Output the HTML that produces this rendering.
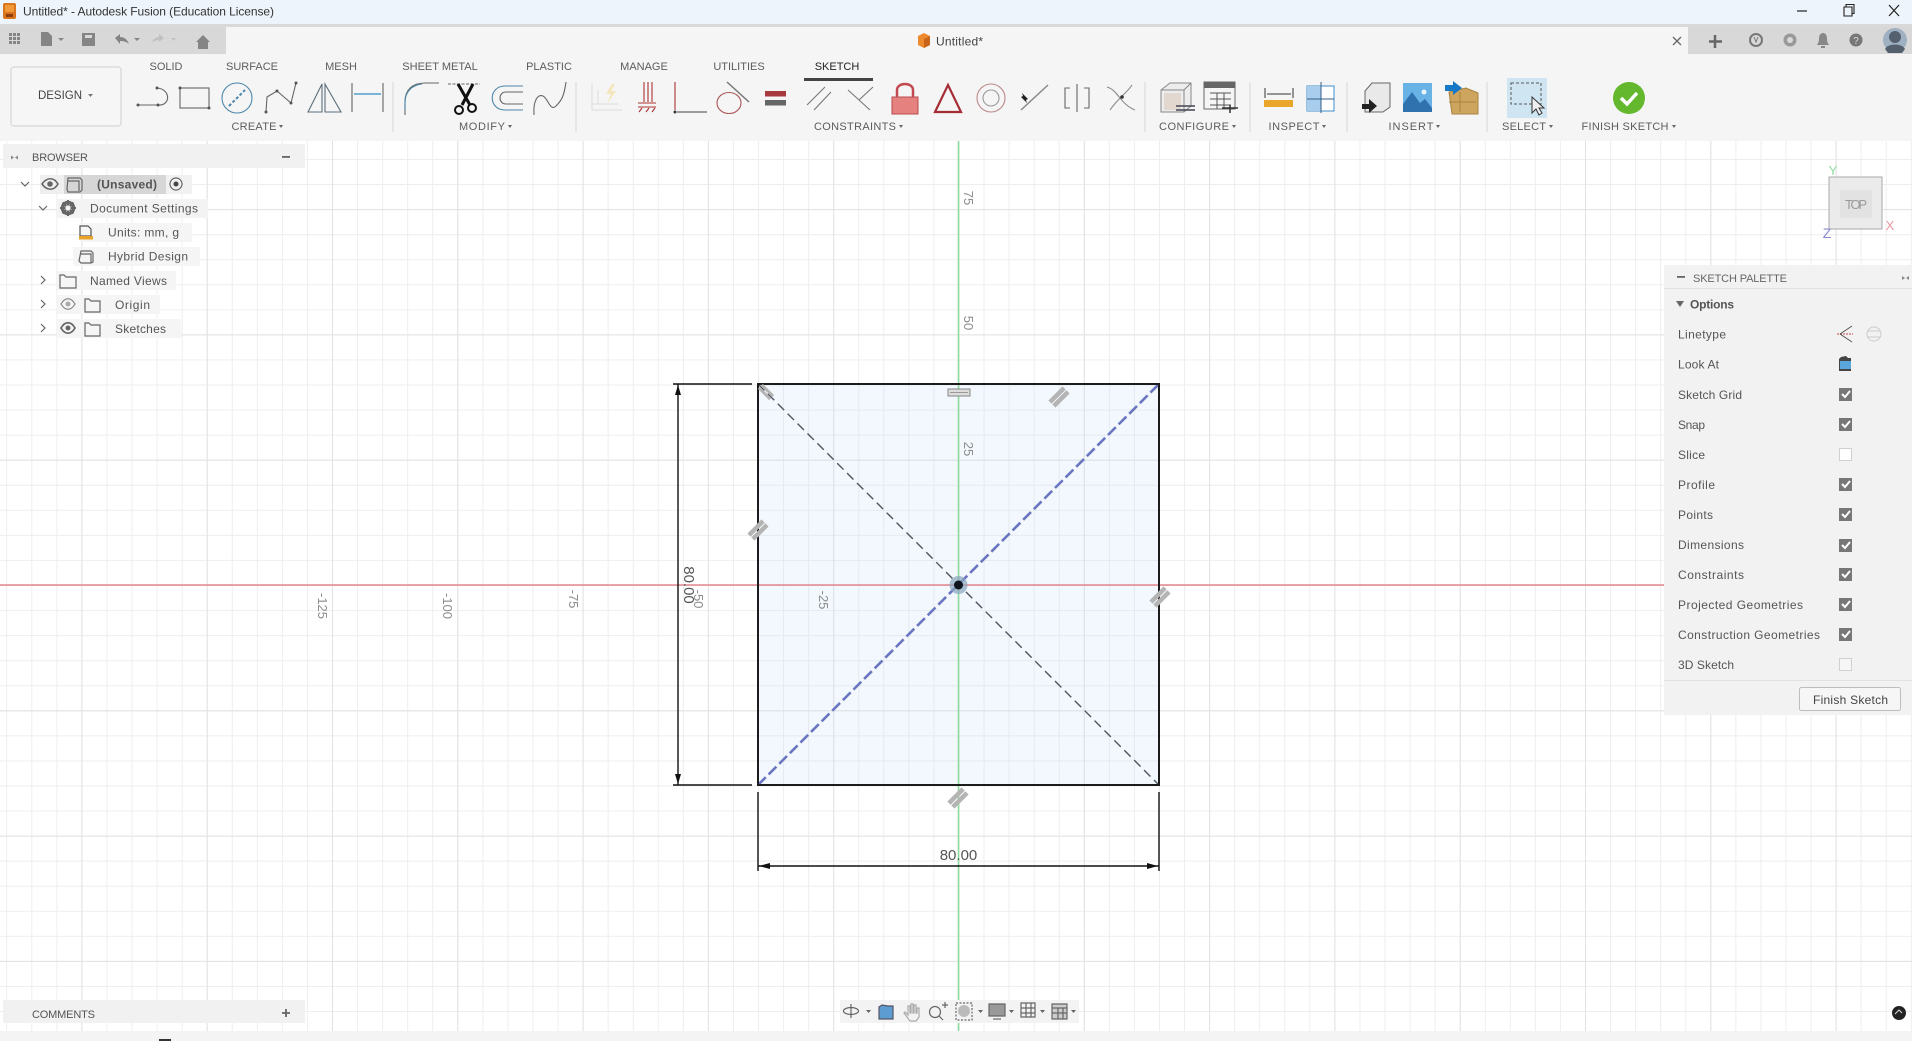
<!DOCTYPE html>
<html><head><meta charset="utf-8"><style>
html,body{margin:0;padding:0;background:#fff;width:1912px;height:1041px;overflow:hidden}
svg{display:block;position:absolute;left:0;top:0}
text{font-family:"Liberation Sans",sans-serif;fill:#555}
.r{font-size:11px;text-anchor:middle;fill:#5c5c5c}
.t{font-size:12px;fill:#555}
.i{fill:none;stroke:#666;stroke-width:1.1}
.a{font-size:13px;fill:#8c8c8c;text-anchor:middle}
.s{fill:#b4b4b4}
</style></head><body>
<svg width="1912" height="1041" viewBox="0 0 1912 1041" xmlns="http://www.w3.org/2000/svg">
<defs>
<pattern id="g1" patternUnits="userSpaceOnUse" x="958.5" y="585" width="25.06" height="25.06"><path d="M0 0V25.06M0 0H25.06" stroke="#eeeeee" stroke-width="2" fill="none"/></pattern>
<pattern id="g2" patternUnits="userSpaceOnUse" x="958.5" y="585" width="125.3" height="125.3"><path d="M0 0V125.3M0 0H125.3" stroke="#e2e2e2" stroke-width="2" fill="none"/></pattern>
</defs>
<!-- canvas -->
<rect width="1912" height="1041" fill="#fff"/>
<rect y="141" width="1912" height="890" fill="url(#g1)"/>
<rect y="141" width="1912" height="890" fill="url(#g2)"/>
<rect x="758" y="384" width="401" height="401" fill="#bcdcf7" fill-opacity=".2"/>
<line x1="0" y1="585" x2="1664" y2="585" stroke="#e4868e" stroke-width="1.4"/>
<line x1="958.5" y1="141" x2="958.5" y2="1031" stroke="#8edb9c" stroke-width="1.6"/>
<!-- axis labels -->
<text class="a" transform="translate(963,198) rotate(90)" dy="-1">75</text>
<text class="a" transform="translate(963,323) rotate(90)" dy="-1">50</text>
<text class="a" transform="translate(963,449) rotate(90)" dy="-1">25</text>
<text class="a" transform="translate(318,606) rotate(90)">-125</text>
<text class="a" transform="translate(443,606) rotate(90)">-100</text>
<text class="a" transform="translate(569,599) rotate(90)">-75</text>
<text class="a" transform="translate(694,599) rotate(90)">-50</text>
<text class="a" transform="translate(819,600) rotate(90)">-25</text>
<!-- sketch -->
<g fill="none">
<path d="M758 384L1159 785" stroke="#4d5560" stroke-width="1.4" stroke-dasharray="9 5"/>
<path d="M758 785L1159 384" stroke="#6a76c0" stroke-width="2.6" stroke-dasharray="11 4"/>
<rect x="758" y="384" width="401" height="401" stroke="#1c1c1c" stroke-width="2"/>
<path d="M673 384H752M673 785H752M678 384V785M758 792V871M1159 792V871M758 866H1159" stroke="#111" stroke-width="1.4"/>
</g>
<path d="M678 385l-3 10h6zM678 784l-3-10h6zM759 866l11-3v6zM1158 866l-11-3v6z" fill="#111"/>
<text transform="translate(684,585) rotate(90)" font-size="15" text-anchor="middle" style="fill:#555">80.00</text>
<text x="958.5" y="860" font-size="15" text-anchor="middle" style="fill:#555">80.00</text>
<circle cx="958.5" cy="585" r="9" fill="#8aa5bd" fill-opacity=".7"/><circle cx="958.5" cy="585" r="4.5" fill="#10141c"/>
<!-- constraint glyphs -->
<g transform="translate(758,530) rotate(-45)"><rect x="-10" y="-5" width="20" height="4.500" class="s"/><rect x="-10" y=".5" width="20" height="4.500" class="s"/></g>
<g transform="translate(1160,597) rotate(-45)"><rect x="-10" y="-5" width="20" height="4.500" class="s"/><rect x="-10" y=".5" width="20" height="4.500" class="s"/></g>
<g transform="translate(1059,397) rotate(-45)"><rect x="-10" y="-5" width="20" height="4.500" class="s"/><rect x="-10" y=".5" width="20" height="4.500" class="s"/></g>
<g transform="translate(958,798) rotate(-45)"><rect x="-10" y="-5" width="20" height="4.500" class="s"/><rect x="-10" y=".5" width="20" height="4.500" class="s"/></g>
<g transform="translate(766,392) rotate(45)"><rect x="-8" y="-3.500" width="16" height="3" class="s"/><rect x="-8" y=".5" width="16" height="3" class="s"/></g>
<rect x="948" y="389" width="22" height="7" fill="#ddd" stroke="#888"/><path d="M950 392.500H968" stroke="#999"/>

<!-- title bar -->
<rect width="1912" height="24" fill="#eef4fb"/>
<rect y="24" width="1912" height="3.500" fill="#d9d9d9"/>
<rect x="3" y="3" width="13" height="16" rx="2" fill="#d9741f"/><rect x="5" y="5" width="9" height="7" fill="#f29a3a"/><rect x="6" y="14" width="7" height="3" fill="#8e3d10"/>
<text x="23" y="15.500" font-size="12" style="fill:#333" textLength="251">Untitled* - Autodesk Fusion (Education License)</text>
<path d="M1797 11H1807" stroke="#222" stroke-width="1.2"/>
<path d="M1844 7h8v9h-8zM1846 7V4.500h8v9h-2" fill="none" stroke="#222" stroke-width="1.1"/>
<path d="M1889 5l10 11M1899 5l-10 11" stroke="#222" stroke-width="1.2"/>

<!-- ribbon -->
<rect y="27" width="1912" height="114" fill="#f5f5f5"/>
<rect y="27" width="226" height="27" fill="#d8d8d8"/>
<rect x="1688" y="27" width="224" height="27" fill="#d8d8d8"/>
<!-- quick access -->
<g fill="#858585">
<rect x="9" y="33" width="3" height="3"/><rect x="13" y="33" width="3" height="3"/><rect x="17" y="33" width="3" height="3"/><rect x="9" y="37" width="3" height="3"/><rect x="13" y="37" width="3" height="3"/><rect x="17" y="37" width="3" height="3"/><rect x="9" y="41" width="3" height="3"/><rect x="13" y="41" width="3" height="3"/><rect x="17" y="41" width="3" height="3"/>
<path d="M41 32h7l4 4v10H41z"/><path d="M58 38h6l-3 3z"/>
<path d="M82 33h13v13H82z"/>
<path d="M115 38l5-4v3c4 0 7 2 9 7-2-2-5-3-9-3v3z"/><path d="M134 38h6l-3 3z"/>
<path d="M164 38l-5-4v3c-3 0-6 2-7 6 2-2 4-3 7-3v2z" fill="#c0c0c0"/><path d="M171 38h5l-2.500 3z" fill="#c0c0c0"/>
<path d="M196 42l7-7 7 7h-2v7h-10v-7z"/>
</g>
<rect x="85" y="35" width="7" height="3" fill="#d8d8d8"/>
<!-- doc tab -->
<path d="M918 36l6-3 6 3v9l-6 3-6-3z" fill="#ee8a2e"/><path d="M924 39v9l6-3v-9z" fill="#c9651b"/>
<text x="936" y="45.500" font-size="12" style="fill:#444" textLength="47">Untitled*</text>
<path d="M1673 37l8 8M1681 37l-8 8" stroke="#666" stroke-width="1.3"/>
<!-- right tools -->
<path d="M1715 35v13M1709 41.500h13" stroke="#666" stroke-width="2.500"/>
<circle cx="1756" cy="40" r="6" fill="none" stroke="#777" stroke-width="2"/><path d="M1754 37l2 5 2-5" fill="none" stroke="#777"/>
<circle cx="1790" cy="40" r="6.500" fill="#999"/><circle cx="1790" cy="40" r="3" fill="#d8d8d8"/>
<path d="M1823 33c-3 0-4 3-4 6 0 3-1 4-2 6h12c-1-2-2-3-2-6 0-3-1-6-4-6zM1821 46h4v2h-4z" fill="#888"/>
<circle cx="1856" cy="40" r="6.500" fill="#777"/><text x="1856" y="44" font-size="10" text-anchor="middle" style="fill:#ddd">?</text>
<circle cx="1895" cy="40" r="12" fill="#9fb0c2"/><circle cx="1895" cy="37" r="6" fill="#54606e"/><path d="M1885 49c3-6 17-6 20 0l-3 4h-14z" fill="#54606e"/>
<!-- tabs -->
<text class="r" x="166" y="70">SOLID</text>
<text class="r" x="252" y="70">SURFACE</text>
<text class="r" x="341" y="70">MESH</text>
<text class="r" x="440" y="70">SHEET METAL</text>
<text class="r" x="549" y="70">PLASTIC</text>
<text class="r" x="644" y="70">MANAGE</text>
<text class="r" x="739" y="70">UTILITIES</text>
<text class="r" x="837" y="70" style="fill:#222">SKETCH</text>
<rect x="804" y="78" width="69" height="3" fill="#444"/>
<!-- design -->
<rect x="11" y="67" width="110" height="59" rx="3" fill="#f6f6f6" stroke="#dcdcdc" stroke-width="1.5"/>
<text x="38" y="99" font-size="11.500" style="fill:#444" textLength="44">DESIGN</text>
<path d="M88 94h5l-2.500 3z" fill="#777"/>
<!-- group labels -->
<text class="r" x="254" y="130" textLength="45">CREATE</text><path d="M279 125h4l-2 3z" fill="#666"/>
<text class="r" x="482" y="130" textLength="46">MODIFY</text><path d="M508 125h4l-2 3z" fill="#666"/>
<text class="r" x="855" y="130" textLength="82">CONSTRAINTS</text><path d="M899 125h4l-2 3z" fill="#666"/>
<text class="r" x="1194" y="130" textLength="70">CONFIGURE</text><path d="M1232 125h4l-2 3z" fill="#666"/>
<text class="r" x="1294" y="130" textLength="51">INSPECT</text><path d="M1322 125h4l-2 3z" fill="#666"/>
<text class="r" x="1411" y="130" textLength="45">INSERT</text><path d="M1436 125h4l-2 3z" fill="#666"/>
<text class="r" x="1524" y="130" textLength="44">SELECT</text><path d="M1549 125h4l-2 3z" fill="#666"/>
<text class="r" x="1625" y="130" textLength="87">FINISH SKETCH</text><path d="M1672 125h4l-2 3z" fill="#666"/>
<!-- separators -->
<path d="M393 82V132M576 82V132M1145 82V132M1250 82V132M1347 82V132M1487 82V132" stroke="#e2e2e2" stroke-width="1.5"/>
<!-- create icons -->
<g class="i">
<path d="M138 105H158C171 106 171 89 157 88"/>
<rect x="180" y="88" width="29" height="20"/>
<circle cx="237" cy="98" r="15" stroke="#4b86ab"/>
<path d="M229 106L245 90" stroke="#4b86ab" stroke-dasharray="3 2" stroke-width="2"/>
<path d="M266 112L267 97L277 91L291 103L296 83"/>
<path d="M308 112L322 84V112zM325 84L341 112H325z" stroke="#5a6f7c"/>
<path d="M352 83V112M383 83V112"/>
<path d="M354 94H381" stroke="#2f8fc4" stroke-width="1.300"/>
</g>
<g fill="#555"><circle cx="138" cy="105" r="1.500"/><circle cx="158" cy="105" r="1.500"/><circle cx="157" cy="88" r="1.500"/><circle cx="180" cy="88" r="1.500"/><circle cx="209" cy="108" r="1.500"/><circle cx="266" cy="112" r="1.500"/><circle cx="277" cy="91" r="1.500"/><circle cx="291" cy="103" r="1.500"/><circle cx="296" cy="83" r="1.500"/></g>
<!-- modify -->
<g class="i">
<path d="M405 115V102C405 90 412 83 425 83H439"/>
<path d="M405 110V102C405 92 412 85 422 84" stroke="#4b86ab"/>
<path d="M448 84H480" stroke-dasharray="3 1.500"/>
<path d="M458 84L470 105M473 84L462 105" stroke="#111" stroke-width="3"/>
<circle cx="459" cy="110" r="4" stroke="#111" stroke-width="2"/><circle cx="472" cy="108" r="4" stroke="#111" stroke-width="2"/>
<path d="M523 86H505C488 86 488 110 505 110H523" stroke="#4b86ab"/>
<path d="M523 92H506C498 92 498 104 506 104H523"/>
<path d="M534 115C533 100 538 94 543 96S550 112 556 106S564 96 566 82"/>
</g>
<!-- constraints -->
<path d="M592 84V110H622M598 90V104M592 104H618" stroke="#dcdcdc" fill="none"/>
<path d="M612 84l-6 10h5l-4 10 9-13h-5l4-7z" fill="#f4e6bc"/>
<g class="i">
<path d="M644 82V102M648 82V102M652 82V102" stroke="#a33"/>
<path d="M638 103H656M638 107H656" stroke="#a33"/>
<path d="M639 112l3-4M646 112l3-4M652 112l3-4" stroke="#a33"/>
<path d="M675 82V110" stroke="#a33"/><path d="M677 112H707" stroke="#444"/>
<ellipse cx="729" cy="103" rx="12" ry="10.500" stroke="#a55"/>
<path d="M727 82L749 102" stroke="#777" stroke-width="1.500"/>
<path d="M807 105L825 87M814 110L831 92" stroke="#777"/>
<path d="M848 90L870 110M873 87L859 100" stroke="#777"/>
<path d="M935 112L948 85L961 112z" stroke="#a62c36" stroke-width="2.200"/>
<circle cx="991" cy="98" r="14" stroke="#b88"/><circle cx="991" cy="98" r="8" stroke="#999"/>
<path d="M1021 110L1048 85" stroke="#888" stroke-width="1.500"/>
<path d="M1070 88H1065V108H1070M1084 88H1089V108H1084M1077 84V112" stroke="#666"/>
<path d="M1107 87C1118 90 1120 104 1135 110M1110 110C1118 98 1126 94 1132 85" stroke="#888"/>
</g>
<circle cx="675" cy="112" r="1.500" fill="#333"/>
<rect x="765" y="91" width="21" height="5.500" fill="#a63a3e"/><rect x="765" y="100" width="21" height="5.500" fill="#666"/>
<path d="M897 97v-7c0-8 16-8 16 0v7" fill="none" stroke="#c24950" stroke-width="2.500"/>
<rect x="892" y="97" width="26" height="17" fill="#e5827f" stroke="#b94a4e"/>
<path d="M1022 93l6 6-2 1 1 3-6-6 2-1z" fill="#222"/>
<circle cx="1122" cy="97" r="1.800" fill="#333"/>
<!-- configure -->
<path d="M1161 90L1170 83H1191V106L1184 112H1161z" fill="#ededed" stroke="#888"/><path d="M1161 90H1184V112M1184 90L1191 83" fill="none" stroke="#888"/><rect x="1164" y="93" width="17" height="17" fill="#e2d8cf"/>
<path d="M1176 106H1195M1176 110H1195" stroke="#445" stroke-width="1.500"/>
<rect x="1204" y="82" width="31" height="6" fill="#666"/><rect x="1204" y="82" width="31" height="27" fill="none" stroke="#666"/>
<path d="M1210 93H1231M1210 99H1231M1210 105H1231M1217 93V109M1224 93V109" stroke="#555"/>
<path d="M1222 108H1238M1230 105V113" stroke="#333" stroke-width="1.500"/>
<!-- inspect -->
<path d="M1265 88V98M1293 88V98M1267 94H1291" stroke="#333"/><rect x="1264" y="100" width="29" height="7" fill="#e9a62b"/>
<rect x="1307" y="86" width="27" height="25" fill="#fff" stroke="#3f8dcb"/><rect x="1307" y="86" width="14" height="25" fill="#a9cdec"/><path d="M1307 99H1334M1321 82V113" stroke="#345f88"/>
<!-- insert -->
<path d="M1365 91L1372 83H1390V107L1383 112H1365z" fill="#e9e9e9" stroke="#666"/><path d="M1362 104h7v-5l8 7-8 7v-4h-7z" fill="#222"/>
<rect x="1403" y="83" width="29" height="29" fill="#68b2e5"/><circle cx="1424" cy="92" r="2.500" fill="#e8f5fc"/><path d="M1403 112V104L1412 92L1420 103L1425 99L1432 108V112z" fill="#2f72ae"/>
<path d="M1449 92L1466 88L1478 93V114H1452z" fill="#cda55e" stroke="#a98342"/><path d="M1460 92V112M1449 102H1476" stroke="#a98342"/>
<path d="M1445 85h8v-4l9 7-9 7v-4h-8z" fill="#1878c8"/>
<!-- select -->
<rect x="1507" y="78" width="40" height="40" fill="#cfe6f2"/>
<rect x="1511" y="83" width="30" height="21" fill="none" stroke="#555" stroke-dasharray="3 2"/>
<path d="M1532 97V113L1536 109L1539 115L1542 113L1539 108H1544z" fill="#eee" stroke="#333"/>
<!-- finish -->
<circle cx="1629" cy="98" r="16" fill="#63b82e"/><path d="M1621 98l6 6 10-11" fill="none" stroke="#fff" stroke-width="3.500"/>

<!-- browser -->
<rect x="3" y="144" width="302" height="24" fill="#f1f1f1"/>
<path d="M11 155.500l3 2-3 2zM18 155.500l-3 2 3 2z" fill="#888"/>
<text x="32" y="161" textLength="56" style="font-size:11px">BROWSER</text>
<rect x="282" y="156" width="8" height="1.800" fill="#666"/>
<rect x="40" y="175" width="24" height="19" fill="#efefef"/>
<rect x="64" y="175" width="102" height="19" fill="#d6d6d6"/>
<rect x="166" y="175" width="26" height="19" fill="#f1f1f1"/>
<rect x="57" y="199" width="151" height="19" fill="#f3f3f3"/>
<rect x="80" y="223" width="112" height="19" fill="#f5f5f5"/>
<rect x="73" y="247" width="127" height="19" fill="#f5f5f5"/>
<rect x="57" y="271" width="119" height="19" fill="#f5f5f5"/>
<rect x="57" y="295" width="103" height="19" fill="#f5f5f5"/>
<rect x="57" y="319" width="124" height="19" fill="#f5f5f5"/>
<g fill="none" stroke="#666" stroke-width="1.200">
<path d="M21 182l4 4 4-4M39 206l4 4 4-4M41 276l4 4-4 4M41 300l4 4-4 4M41 324l4 4-4 4"/>
<path d="M42 184c5-7 12-7 16 0-4 7-11 7-16 0z" stroke-width="1.600"/>
<path d="M68 178h12l2 2v10l-2 2H68l-1-3z"/><path d="M68 181h11v10"/>
<circle cx="176" cy="184" r="6"/>
<path d="M81 251h10l2 2v9l-2 1H81l-2-2z"/><path d="M81 254h10v9"/>
<path d="M60 275h4l2 2h10v11H60zM85 299h4l2 2h9v11H85zM85 323h4l2 2h9v11H85z"/>
<path d="M61 304c4-7 10-7 14 0-4 7-10 7-14 0z" stroke="#888"/>
<path d="M61 328c4-7 10-7 14 0-4 7-10 7-14 0z" stroke-width="1.700"/>
<path d="M80 226h8l3 3v7H80z" stroke="#555"/>
</g>
<circle cx="50" cy="184" r="2.800" fill="#666"/><circle cx="176" cy="184" r="2.500" fill="#444"/>
<circle cx="68" cy="328" r="2.500" fill="#666"/><circle cx="68" cy="304" r="2.500" fill="#aaa"/>
<rect x="79" y="236" width="14" height="3.500" fill="#e9a32b"/>
<circle cx="68" cy="208" r="5.500" fill="none" stroke="#666" stroke-width="3.500"/>
<path d="M68 200v16M60 208h16M62.500 202.500l11 11M73.500 202.500l-11 11" stroke="#666" stroke-width="2"/><circle cx="68" cy="208" r="2.600" fill="#f3f3f3"/>
<text class="t" x="97" y="188.500" textLength="60" style="font-weight:bold;fill:#555">(Unsaved)</text>
<text class="t" x="90" y="212.500" textLength="108">Document Settings</text>
<text class="t" x="108" y="236.500" textLength="71">Units: mm, g</text>
<text class="t" x="108" y="260.500" textLength="80">Hybrid Design</text>
<text class="t" x="90" y="285" textLength="77">Named Views</text>
<text class="t" x="115" y="309" textLength="35">Origin</text>
<text class="t" x="115" y="333" textLength="51">Sketches</text>
<!-- comments -->
<rect x="3" y="1000" width="302" height="23" fill="#f1f1f1"/>
<text x="32" y="1018" textLength="63" style="font-size:11px;fill:#555">COMMENTS</text>
<path d="M286 1009v8M282 1013h8" stroke="#666" stroke-width="1.800"/>
<!-- bottom -->
<rect y="1031" width="1912" height="10" fill="#f4f4f4"/>
<rect x="159" y="1039" width="12" height="2" fill="#333"/>
<rect x="840" y="1000" width="239" height="23" fill="#f3f3f3"/>
<g fill="#666"><path d="M866 1010h5l-2.500 3zM978 1010h5l-2.500 3zM1009 1010h5l-2.500 3zM1040 1010h5l-2.500 3zM1071 1010h5l-2.500 3z"/></g>
<g fill="none" stroke="#666" stroke-width="1.200">
<ellipse cx="851" cy="1011" rx="7.500" ry="3.500"/><path d="M851 1004v14"/>
<path d="M879 1007l3-2 6 1h5v13h-14z" fill="#5d9cd1" stroke="#556"/>
<path d="M910 1021l-6-8 1-1 3 3v-9h2v7h1v-9h2v9h1v-8h2v8h1v-5h2v9l-3 4z" stroke="#aaa" fill="#f3f3f3"/>
<circle cx="935" cy="1012" r="5.500"/><path d="M939 1016l4 4M942 1005h6M945 1002v6"/>
<rect x="956" y="1003" width="16" height="17" stroke-dasharray="2 1.500"/>
<path d="M989 1004h16v12h-16z" fill="#999"/><path d="M993 1019h8"/>
<path d="M1021 1003h14v14h-14zM1026 1003v14M1031 1003v14M1021 1008h14M1021 1013h14"/>
<path d="M1052 1004h15v15h-15z" fill="#ccc"/><path d="M1052 1008h15M1058 1008v11M1063 1008v11M1052 1013h15"/>
</g>
<circle cx="964" cy="1011" r="6" fill="#bbb"/>
<circle cx="1899" cy="1013" r="7" fill="#222"/><path d="M1895 1014l4-4 3 3" fill="none" stroke="#ddd"/>
<!-- viewcube -->
<rect x="1829" y="177" width="53" height="52" fill="#ebebeb" stroke="#aaa"/>
<rect x="1840" y="190" width="32" height="28" fill="#e2e2e2"/>
<text x="1856" y="209" font-size="13" text-anchor="middle" textLength="22" style="fill:#9a9a9a">TOP</text>
<text x="1833" y="175" font-size="13" text-anchor="middle" style="fill:#8fdca4">Y</text>
<text x="1890" y="230" font-size="13" text-anchor="middle" style="fill:#ee98a0">X</text>
<text x="1827" y="238" font-size="14" text-anchor="middle" style="fill:#8888cc">Z</text>
<!-- palette -->
<rect x="1664" y="265" width="248" height="450" fill="#f2f2f2"/>
<path d="M1664 288.500H1912M1664 680.500H1912" stroke="#e2e2e2"/>
<rect x="1677" y="276" width="8" height="1.800" fill="#666"/>
<text x="1693" y="282" textLength="94" style="font-size:11px;fill:#666">SKETCH PALETTE</text>
<path d="M1902 276l3 2-3 2zM1909 276l-3 2 3 2z" fill="#888"/>
<path d="M1676 301h8l-4 6z" fill="#666"/>
<text class="t" x="1690" y="308.500" textLength="44" style="font-weight:bold">Options</text>
<text class="t" x="1678" y="338.500" textLength="48">Linetype</text>
<text class="t" x="1678" y="368.500" textLength="41">Look At</text>
<text class="t" x="1678" y="399" textLength="64">Sketch Grid</text>
<text class="t" x="1678" y="429" textLength="27">Snap</text>
<text class="t" x="1678" y="459" textLength="27">Slice</text>
<text class="t" x="1678" y="489" textLength="37">Profile</text>
<text class="t" x="1678" y="519" textLength="35">Points</text>
<text class="t" x="1678" y="549" textLength="66">Dimensions</text>
<text class="t" x="1678" y="579" textLength="66">Constraints</text>
<text class="t" x="1678" y="609" textLength="125">Projected Geometries</text>
<text class="t" x="1678" y="639" textLength="142">Construction Geometries</text>
<text class="t" x="1678" y="669" textLength="56">3D Sketch</text>
<path d="M1837 334H1853" stroke="#c44" stroke-dasharray="2 1"/><path d="M1840 334L1852 326M1840 334L1852 342" stroke="#555" fill="none"/>
<circle cx="1874" cy="334" r="7" fill="none" stroke="#ccc"/><path d="M1868 331h12M1868 337h12" stroke="#ccc"/>
<path d="M1839 359l2-2 5-1 2 2h3v13h-12z" fill="#444"/><rect x="1840" y="361" width="11" height="8" fill="#5aa5dc"/>
<g fill="#777">
<rect x="1839" y="388" width="13" height="13"/><rect x="1839" y="418" width="13" height="13"/><rect x="1839" y="478" width="13" height="13"/><rect x="1839" y="508" width="13" height="13"/><rect x="1839" y="539" width="13" height="13"/><rect x="1839" y="568" width="13" height="13"/><rect x="1839" y="598" width="13" height="13"/><rect x="1839" y="628" width="13" height="13"/>
</g>
<g fill="none" stroke="#fff" stroke-width="2">
<path d="M1842 394l3 3 5-6"/><path d="M1842 424l3 3 5-6"/><path d="M1842 484l3 3 5-6"/><path d="M1842 514l3 3 5-6"/><path d="M1842 545l3 3 5-6"/><path d="M1842 574l3 3 5-6"/><path d="M1842 604l3 3 5-6"/><path d="M1842 634l3 3 5-6"/>
</g>
<rect x="1839.500" y="448.500" width="12" height="12" fill="#fff" stroke="#d0d0d0"/>
<rect x="1839.500" y="658.500" width="12" height="12" fill="#f6f6f6" stroke="#d0d0d0"/>
<rect x="1799.500" y="687.500" width="101" height="23" rx="2" fill="#f6f6f6" stroke="#bdbdbd"/>
<text class="t" x="1813" y="704" textLength="75" style="fill:#444">Finish Sketch</text>
</svg>
</body></html>
